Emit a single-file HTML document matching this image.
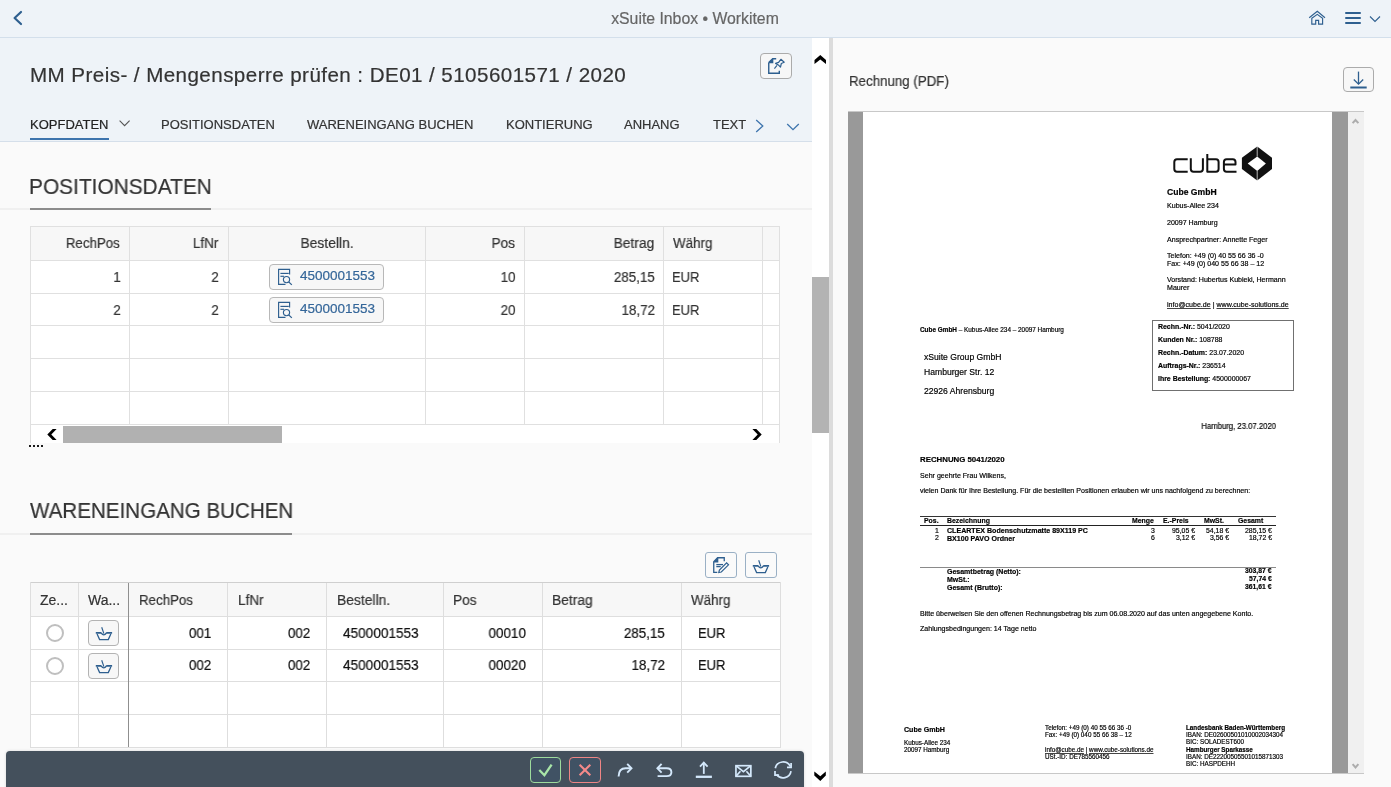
<!DOCTYPE html>
<html><head><meta charset="utf-8"><style>
html,body{margin:0;padding:0;}
body{width:1391px;height:787px;position:relative;overflow:hidden;font-family:"Liberation Sans",sans-serif;background:#fafafa;}
body>div{position:absolute;}
.t{white-space:pre;will-change:transform;}
u{text-decoration-thickness:0.5px;text-underline-offset:0.7px;text-decoration-color:#444;}
</style></head><body>
<div style="left:0px;top:0px;width:1391px;height:37px;background:#eef3f8;"></div>
<div style="left:0px;top:37px;width:1391px;height:1px;background:#d3dfeb;"></div>
<svg style="position:absolute;left:10px;top:8px;" width="16" height="20" viewBox="0 0 16 20"><polyline points="11,4 4.6,10 11,16" fill="none" stroke="#2e5f8f" stroke-width="2.2" stroke-linecap="round" stroke-linejoin="round"/></svg>
<div class="t" style="left:195.00px;width:1000px;text-align:center;top:10.98px;font-size:15.8px;line-height:15.8px;color:#666;font-weight:400;-webkit-text-stroke:0.2px #666;">xSuite Inbox &#8226; Workitem</div>
<svg style="position:absolute;left:1306px;top:8px;" width="22" height="20" viewBox="0 0 22 20"><g fill="none" stroke="#2e5f8f" stroke-width="1.15"><polyline points="3.2,9.8 11.3,3.3 19,9.8"/><path d="M5.8,10.3 L11.3,6.4 L16.6,10.3 V16.1 H12.6 V12.3 H9.7 V16.1 H5.8 Z"/></g></svg>
<div style="left:1344.5px;top:12px;width:16.5px;height:2px;background:#2e5f8f;border-radius:1px"></div>
<div style="left:1344.5px;top:17px;width:16.5px;height:2px;background:#2e5f8f;border-radius:1px"></div>
<div style="left:1344.5px;top:22px;width:16.5px;height:2px;background:#2e5f8f;border-radius:1px"></div>
<svg style="position:absolute;left:1368px;top:14px;" width="14" height="10" viewBox="0 0 14 10"><polyline points="2,2.5 7,7.5 12,2.5" fill="none" stroke="#2e5f8f" stroke-width="1.1"/></svg>
<div style="left:0px;top:38px;width:812px;height:103px;background:#eef3f8;"></div>
<div style="left:0px;top:141px;width:812px;height:1px;background:#d5dfea;"></div>
<div class="t" style="left:29.60px;top:65.41px;font-size:20.6px;line-height:20.6px;color:#333333;font-weight:400;-webkit-text-stroke:0.2px #333333;letter-spacing:0.43px">MM Preis- / Mengensperre pr&uuml;fen : DE01 / 5105601571 / 2020</div>
<div style="left:760px;top:53px;width:32px;height:26px;box-sizing:border-box;border:1px solid #ababab;border-radius:4px;background:#f7f7f7"></div>
<svg style="position:absolute;left:766px;top:56px;" width="20" height="20" viewBox="0 0 20 20"><g fill="none" stroke="#2e5f8f" stroke-width="1.4"><path d="M2.75,6.6 V17.2 H13.3 V14.8"/><path d="M2.75,6.6 L6.7,2.7 H10.2"/></g><path d="M2.05,7.2 L7.3,2 V7.2 Z" fill="#2e5f8f"/><g fill="none" stroke="#2e5f8f" stroke-width="1.2" stroke-linejoin="round"><path d="M14.9,3.3 L18.2,6.3 L15.3,7.5 L14.5,11.2 L12.8,9.3 L9.6,7.4 L12.6,6.4 Z"/><line x1="11" y1="9.4" x2="8.4" y2="12.6" stroke-width="1.1"/></g></svg>
<div class="t" style="left:30.20px;top:118.15px;font-size:13px;line-height:13px;color:#222;font-weight:400;-webkit-text-stroke:0.2px #222;">KOPFDATEN</div>
<div class="t" style="left:160.60px;top:118.15px;font-size:13px;line-height:13px;color:#333;font-weight:400;-webkit-text-stroke:0.2px #333;">POSITIONSDATEN</div>
<div class="t" style="left:307.00px;top:118.15px;font-size:13px;line-height:13px;color:#333;font-weight:400;-webkit-text-stroke:0.2px #333;">WARENEINGANG BUCHEN</div>
<div class="t" style="left:506.00px;top:118.15px;font-size:13px;line-height:13px;color:#333;font-weight:400;-webkit-text-stroke:0.2px #333;">KONTIERUNG</div>
<div class="t" style="left:624.40px;top:118.15px;font-size:13px;line-height:13px;color:#333;font-weight:400;-webkit-text-stroke:0.2px #333;">ANHANG</div>
<div class="t" style="left:712.50px;top:118.15px;font-size:13px;line-height:13px;color:#333;font-weight:400;-webkit-text-stroke:0.2px #333;">TEXT</div>
<svg style="position:absolute;left:117px;top:117px;" width="14" height="12" viewBox="0 0 14 12"><polyline points="2.6,3.6 7.6,8.6 12.6,3.6" fill="none" stroke="#555" stroke-width="1.1"/></svg>
<div style="left:30px;top:138px;width:79px;height:2px;background:#3d74ad;"></div>
<svg style="position:absolute;left:752px;top:117px;" width="14" height="18" viewBox="0 0 14 18"><polyline points="4.2,3 10.8,9 4.2,15" fill="none" stroke="#3d74ad" stroke-width="1.3"/></svg>
<svg style="position:absolute;left:785px;top:120px;" width="16" height="12" viewBox="0 0 16 12"><polyline points="2.2,4 8,9.7 13.8,4" fill="none" stroke="#3d74ad" stroke-width="1.3"/></svg>
<div style="left:0px;top:142px;width:812px;height:645px;background:#fafafa;"></div>
<div style="left:812px;top:38px;width:17px;height:749px;background:#ffffff;"></div>
<div style="left:829px;top:38px;width:4px;height:749px;background:#dcdcdc;"></div>
<svg style="position:absolute;left:812px;top:50px;" width="17" height="18" viewBox="0 0 17 18"><path d="M2.5,14 L8.3,9.4 L14,14 V10 L8.3,5 L2.5,10 Z" fill="#000"/></svg>
<div style="left:812px;top:277px;width:17px;height:156px;background:#b3b3b3;"></div>
<svg style="position:absolute;left:812px;top:768px;" width="17" height="16" viewBox="0 0 17 16"><path d="M2.3,3.6 L8.3,8.3 L13.8,3.6 V7.6 L8.3,12.9 L2.3,7.6 Z" fill="#000"/></svg>
<div style="left:833px;top:38px;width:558px;height:749px;background:#fafafa;"></div>
<div class="t" style="left:849.20px;top:73.75px;font-size:14px;line-height:14px;color:#333333;font-weight:400;transform:scaleX(0.95);transform-origin:0 0;-webkit-text-stroke:0.2px #333333;">Rechnung (PDF)</div>
<div style="left:1343px;top:67px;width:31px;height:25px;box-sizing:border-box;border:1px solid #ababab;border-radius:4px;background:#f7f7f7"></div>
<svg style="position:absolute;left:1343px;top:67px;" width="31" height="25" viewBox="0 0 31 25"><g fill="none" stroke="#2e5f8f"><line x1="15.5" y1="4.6" x2="15.5" y2="17" stroke-width="1.3"/><polyline points="10.8,12.5 15.5,17.2 20.2,12.5" stroke-width="1.3"/><line x1="7.3" y1="20.5" x2="23.7" y2="20.5" stroke-width="2"/></g></svg>
<div style="left:848px;top:111px;width:516px;height:1px;background:#c8c8c8;"></div>
<div style="left:848px;top:112px;width:15px;height:661px;background:#999999;"></div>
<div style="left:863px;top:112px;width:469px;height:661px;background:#ffffff;"></div>
<div style="left:1332px;top:112px;width:16px;height:661px;background:#999999;"></div>
<div style="left:1348px;top:112px;width:16px;height:661px;background:#f0f0f0;"></div>
<div style="left:848px;top:773px;width:516px;height:1px;background:#c8c8c8;"></div>
<svg style="position:absolute;left:1348px;top:114px;" width="16" height="14" viewBox="0 0 16 14"><polyline points="4.6,9.2 7.5,6 10.4,9.2" fill="none" stroke="#adadad" stroke-width="2"/></svg>
<svg style="position:absolute;left:1348px;top:758px;" width="16" height="14" viewBox="0 0 16 14"><polyline points="4.6,6.2 7.5,9.4 10.4,6.2" fill="none" stroke="#adadad" stroke-width="2"/></svg>
<svg style="position:absolute;left:1170px;top:145px;" width="110" height="40" viewBox="0 0 110 40"><g fill="none" stroke="#111" stroke-width="2" stroke-linejoin="round"><path d="M17.7,14.2 H7 Q4.3,14.2 4.3,17 V24 Q4.3,26.7 7,26.7 H17.7"/><path d="M20.8,13.2 V24 Q20.8,26.7 23.5,26.7 H30.2 Q32.9,26.7 32.9,24 V13.2"/><path d="M37.3,9.1 V26.7 H46 Q48.6,26.7 48.6,24 V17 Q48.6,14.2 46,14.2 H37.3"/><path d="M66.5,26.7 H56.6 Q53.9,26.7 53.9,24 V17 Q53.9,14.2 56.6,14.2 H62.8 Q65.5,14.2 65.5,17 V19.4 H53.9"/></g><path d="M87.2,1.6 L102,12.8 V23.9 L87.2,35.5 L71.9,23.9 V12.8 Z" fill="#111"/><path d="M87.2,11.5 L95.9,18.6 L87.2,26 L77.7,18.6 Z" fill="#fff"/><line x1="87.2" y1="1" x2="87.2" y2="11.5" stroke="#fff" stroke-width="0.7"/><line x1="87.2" y1="26" x2="87.2" y2="36" stroke="#fff" stroke-width="0.7"/></svg>
<div class="t" style="left:1166.50px;top:187.67px;font-size:8.6px;line-height:8.6px;color:#000;font-weight:700;-webkit-text-stroke:0.18px #000;">Cube GmbH</div>
<div class="t" style="left:1166.50px;top:202.27px;font-size:7.07px;line-height:7.07px;color:#000;font-weight:400;-webkit-text-stroke:0.18px #000;">Kubus-Allee 234</div>
<div class="t" style="left:1166.50px;top:219.47px;font-size:7.07px;line-height:7.07px;color:#000;font-weight:400;-webkit-text-stroke:0.18px #000;">20097 Hamburg</div>
<div class="t" style="left:1166.50px;top:235.87px;font-size:7.07px;line-height:7.07px;color:#000;font-weight:400;-webkit-text-stroke:0.18px #000;">Ansprechpartner: Annette Feger</div>
<div class="t" style="left:1166.50px;top:252.27px;font-size:7.07px;line-height:7.07px;color:#000;font-weight:400;-webkit-text-stroke:0.18px #000;">Telefon: +49 (0) 40 55 66 36 -0</div>
<div class="t" style="left:1166.50px;top:260.17px;font-size:7.07px;line-height:7.07px;color:#000;font-weight:400;-webkit-text-stroke:0.18px #000;">Fax: +49 (0) 040 55 66 38 &#8211; 12</div>
<div class="t" style="left:1166.50px;top:276.47px;font-size:7.07px;line-height:7.07px;color:#000;font-weight:400;-webkit-text-stroke:0.18px #000;">Vorstand: Hubertus Kubieki, Hermann</div>
<div class="t" style="left:1166.50px;top:284.17px;font-size:7.07px;line-height:7.07px;color:#000;font-weight:400;-webkit-text-stroke:0.18px #000;">Maurer</div>
<div class="t" style="left:1166.50px;top:300.87px;font-size:7.07px;line-height:7.07px;color:#000;font-weight:400;-webkit-text-stroke:0.18px #000;"><u>info@cube.de</u> | <u>www.cube-solutions.de</u></div>
<div class="t" style="left:920.10px;top:327.33px;font-size:6.4px;line-height:6.4px;color:#000;font-weight:400;-webkit-text-stroke:0.18px #000;"><b>Cube GmbH</b> &#8211; Kubus-Allee 234 &#8211; 20097 Hamburg</div>
<div class="t" style="left:923.60px;top:353.07px;font-size:8.6px;line-height:8.6px;color:#000;font-weight:400;-webkit-text-stroke:0.18px #000;">xSuite Group GmbH</div>
<div class="t" style="left:923.60px;top:367.97px;font-size:8.6px;line-height:8.6px;color:#000;font-weight:400;-webkit-text-stroke:0.18px #000;">Hamburger Str. 12</div>
<div class="t" style="left:923.60px;top:387.27px;font-size:8.6px;line-height:8.6px;color:#000;font-weight:400;-webkit-text-stroke:0.18px #000;">22926 Ahrensburg</div>
<div style="left:1152px;top:319.5px;width:142px;height:71.5px;box-sizing:border-box;border:1px solid #707070"></div>
<div class="t" style="left:1158.20px;top:324.07px;font-size:6.95px;line-height:6.95px;color:#000;font-weight:400;-webkit-text-stroke:0.18px #000;"><b>Rechn.-Nr.:</b> 5041/2020</div>
<div class="t" style="left:1158.20px;top:337.07px;font-size:6.95px;line-height:6.95px;color:#000;font-weight:400;-webkit-text-stroke:0.18px #000;"><b>Kunden Nr.:</b> 108788</div>
<div class="t" style="left:1158.20px;top:349.97px;font-size:6.95px;line-height:6.95px;color:#000;font-weight:400;-webkit-text-stroke:0.18px #000;"><b>Rechn.-Datum:</b> 23.07.2020</div>
<div class="t" style="left:1158.20px;top:362.87px;font-size:6.95px;line-height:6.95px;color:#000;font-weight:400;-webkit-text-stroke:0.18px #000;"><b>Auftrags-Nr.:</b> 236514</div>
<div class="t" style="left:1158.20px;top:375.57px;font-size:6.95px;line-height:6.95px;color:#000;font-weight:400;-webkit-text-stroke:0.18px #000;"><b>Ihre Bestellung:</b> 4500000067</div>
<div class="t" style="right:114.80px;top:421.62px;font-size:8.6px;line-height:8.6px;color:#000;font-weight:400;transform:scaleX(0.9);transform-origin:100% 0;-webkit-text-stroke:0.18px #000;">Hamburg, 23.07.2020</div>
<div class="t" style="left:919.80px;top:455.80px;font-size:7.85px;line-height:7.85px;color:#000;font-weight:700;-webkit-text-stroke:0.18px #000;">RECHNUNG 5041/2020</div>
<div class="t" style="left:919.80px;top:471.87px;font-size:7.07px;line-height:7.07px;color:#000;font-weight:400;-webkit-text-stroke:0.18px #000;">Sehr geehrte Frau Wilkens,</div>
<div class="t" style="left:919.80px;top:486.87px;font-size:7.07px;line-height:7.07px;color:#000;font-weight:400;-webkit-text-stroke:0.18px #000;">vielen Dank f&uuml;r Ihre Bestellung. F&uuml;r die bestellten Positionen erlauben wir uns nachfolgend zu berechnen:</div>
<div style="left:919.5px;top:515.5px;width:356.5px;height:1.5px;background:#333;"></div>
<div style="left:919.5px;top:524.5px;width:356.5px;height:1.0px;background:#222;"></div>
<div class="t" style="left:923.70px;top:517.61px;font-size:6.9px;line-height:6.9px;color:#000;font-weight:700;-webkit-text-stroke:0.18px #000;">Pos.</div>
<div class="t" style="left:947.40px;top:517.61px;font-size:6.9px;line-height:6.9px;color:#000;font-weight:700;-webkit-text-stroke:0.18px #000;">Bezeichnung</div>
<div class="t" style="right:237.10px;top:517.61px;font-size:6.9px;line-height:6.9px;color:#000;font-weight:700;-webkit-text-stroke:0.18px #000;">Menge</div>
<div class="t" style="right:202.00px;top:517.61px;font-size:6.9px;line-height:6.9px;color:#000;font-weight:700;-webkit-text-stroke:0.18px #000;">E.-Preis</div>
<div class="t" style="right:167.00px;top:517.61px;font-size:6.9px;line-height:6.9px;color:#000;font-weight:700;-webkit-text-stroke:0.18px #000;">MwSt.</div>
<div class="t" style="right:127.80px;top:517.61px;font-size:6.9px;line-height:6.9px;color:#000;font-weight:700;-webkit-text-stroke:0.18px #000;">Gesamt</div>
<div class="t" style="right:452.60px;top:527.51px;font-size:6.9px;line-height:6.9px;color:#000;font-weight:400;-webkit-text-stroke:0.18px #000;">1</div>
<div class="t" style="left:947.40px;top:527.37px;font-size:7.07px;line-height:7.07px;color:#000;font-weight:700;-webkit-text-stroke:0.18px #000;">CLEARTEX Bodenschutzmatte 89X119 PC</div>
<div class="t" style="right:236.50px;top:527.51px;font-size:6.9px;line-height:6.9px;color:#000;font-weight:400;-webkit-text-stroke:0.18px #000;">3</div>
<div class="t" style="right:196.10px;top:527.51px;font-size:6.9px;line-height:6.9px;color:#000;font-weight:400;-webkit-text-stroke:0.18px #000;">95,05 &#8364;</div>
<div class="t" style="right:162.00px;top:527.51px;font-size:6.9px;line-height:6.9px;color:#000;font-weight:400;-webkit-text-stroke:0.18px #000;">54,18 &#8364;</div>
<div class="t" style="right:119.10px;top:527.51px;font-size:6.9px;line-height:6.9px;color:#000;font-weight:400;-webkit-text-stroke:0.18px #000;">285,15 &#8364;</div>
<div class="t" style="right:452.60px;top:535.41px;font-size:6.9px;line-height:6.9px;color:#000;font-weight:400;-webkit-text-stroke:0.18px #000;">2</div>
<div class="t" style="left:947.40px;top:535.27px;font-size:7.07px;line-height:7.07px;color:#000;font-weight:700;-webkit-text-stroke:0.18px #000;">BX100 PAVO Ordner</div>
<div class="t" style="right:236.50px;top:535.41px;font-size:6.9px;line-height:6.9px;color:#000;font-weight:400;-webkit-text-stroke:0.18px #000;">6</div>
<div class="t" style="right:196.10px;top:535.41px;font-size:6.9px;line-height:6.9px;color:#000;font-weight:400;-webkit-text-stroke:0.18px #000;">3,12 &#8364;</div>
<div class="t" style="right:162.00px;top:535.41px;font-size:6.9px;line-height:6.9px;color:#000;font-weight:400;-webkit-text-stroke:0.18px #000;">3,56 &#8364;</div>
<div class="t" style="right:119.10px;top:535.41px;font-size:6.9px;line-height:6.9px;color:#000;font-weight:400;-webkit-text-stroke:0.18px #000;">18,72 &#8364;</div>
<div style="left:919.5px;top:566.5px;width:356.5px;height:1.5px;background:#8a8a8a;"></div>
<div class="t" style="left:947.40px;top:567.82px;font-size:7.0px;line-height:7.0px;color:#000;font-weight:700;-webkit-text-stroke:0.18px #000;">Gesamtbetrag (Netto):</div>
<div class="t" style="right:119.10px;top:567.99px;font-size:6.8px;line-height:6.8px;color:#000;font-weight:700;-webkit-text-stroke:0.18px #000;">303,87 &#8364;</div>
<div class="t" style="left:947.40px;top:576.02px;font-size:7.0px;line-height:7.0px;color:#000;font-weight:700;-webkit-text-stroke:0.18px #000;">MwSt.:</div>
<div class="t" style="right:119.10px;top:576.19px;font-size:6.8px;line-height:6.8px;color:#000;font-weight:700;-webkit-text-stroke:0.18px #000;">57,74 &#8364;</div>
<div class="t" style="left:947.40px;top:584.22px;font-size:7.0px;line-height:7.0px;color:#000;font-weight:700;-webkit-text-stroke:0.18px #000;">Gesamt (Brutto):</div>
<div class="t" style="right:119.10px;top:584.39px;font-size:6.8px;line-height:6.8px;color:#000;font-weight:700;-webkit-text-stroke:0.18px #000;">361,61 &#8364;</div>
<div class="t" style="left:919.60px;top:610.07px;font-size:7.07px;line-height:7.07px;color:#000;font-weight:400;-webkit-text-stroke:0.18px #000;">Bitte &uuml;berweisen Sie den offenen Rechnungsbetrag bis zum 06.08.2020 auf das unten angegebene Konto.</div>
<div class="t" style="left:919.60px;top:625.17px;font-size:7.07px;line-height:7.07px;color:#000;font-weight:400;-webkit-text-stroke:0.18px #000;">Zahlungsbedingungen: 14 Tage netto</div>
<div class="t" style="left:903.50px;top:727.34px;font-size:7.1px;line-height:7.1px;color:#000;font-weight:700;-webkit-text-stroke:0.18px #000;">Cube GmbH</div>
<div class="t" style="left:903.50px;top:740.12px;font-size:6.3px;line-height:6.3px;color:#000;font-weight:400;-webkit-text-stroke:0.18px #000;">Kubus-Allee 234</div>
<div class="t" style="left:903.50px;top:747.12px;font-size:6.3px;line-height:6.3px;color:#000;font-weight:400;-webkit-text-stroke:0.18px #000;">20097 Hamburg</div>
<div class="t" style="left:1045.00px;top:725.42px;font-size:6.3px;line-height:6.3px;color:#000;font-weight:400;-webkit-text-stroke:0.18px #000;">Telefon: +49 (0) 40 55 66 36 -0</div>
<div class="t" style="left:1045.00px;top:732.42px;font-size:6.3px;line-height:6.3px;color:#000;font-weight:400;-webkit-text-stroke:0.18px #000;">Fax: +49 (0) 040 55 66 38 &#8211; 12</div>
<div class="t" style="left:1045.00px;top:746.72px;font-size:6.3px;line-height:6.3px;color:#000;font-weight:400;-webkit-text-stroke:0.18px #000;"><u>info@cube.de</u> | <u>www.cube-solutions.de</u></div>
<div class="t" style="left:1045.00px;top:753.82px;font-size:6.3px;line-height:6.3px;color:#000;font-weight:400;-webkit-text-stroke:0.18px #000;">USt.-ID: DE785560456</div>
<div class="t" style="left:1185.80px;top:725.02px;font-size:6.3px;line-height:6.3px;color:#000;font-weight:700;-webkit-text-stroke:0.18px #000;">Landesbank Baden-W&uuml;rttemberg</div>
<div class="t" style="left:1185.80px;top:732.22px;font-size:6.3px;line-height:6.3px;color:#000;font-weight:400;-webkit-text-stroke:0.18px #000;">IBAN: DE02600501010002034304</div>
<div class="t" style="left:1185.80px;top:739.42px;font-size:6.3px;line-height:6.3px;color:#000;font-weight:400;-webkit-text-stroke:0.18px #000;">BIC: SOLADEST600</div>
<div class="t" style="left:1185.80px;top:746.62px;font-size:6.3px;line-height:6.3px;color:#000;font-weight:700;-webkit-text-stroke:0.18px #000;">Hamburger Sparkasse</div>
<div class="t" style="left:1185.80px;top:753.62px;font-size:6.3px;line-height:6.3px;color:#000;font-weight:400;-webkit-text-stroke:0.18px #000;">IBAN: DE22200505501015871303</div>
<div class="t" style="left:1185.80px;top:760.92px;font-size:6.3px;line-height:6.3px;color:#000;font-weight:400;-webkit-text-stroke:0.18px #000;">BIC: HASPDEHH</div>
<div class="t" style="left:29.30px;top:176.35px;font-size:21.2px;line-height:21.2px;color:#333333;font-weight:400;transform:scaleX(0.985);transform-origin:0 0;-webkit-text-stroke:0.2px #333333;">POSITIONSDATEN</div>
<div style="left:0px;top:208px;width:812px;height:2px;background:#f0f0f0;"></div>
<div style="left:30px;top:208px;width:181px;height:2px;background:#8c8c8c;"></div>
<div style="left:30px;top:226px;width:750px;height:217px;background:#ffffff;"></div>
<div style="left:31px;top:227px;width:748px;height:33px;background:#f7f7f7;"></div>
<div style="left:30px;top:226px;width:750px;height:1px;background:#e0e0e0;"></div>
<div style="left:30px;top:226px;width:1px;height:217px;background:#e0e0e0;"></div>
<div style="left:779px;top:226px;width:1px;height:217px;background:#e0e0e0;"></div>
<div style="left:30px;top:260px;width:750px;height:1px;background:#e0e0e0;"></div>
<div style="left:30px;top:293px;width:750px;height:1px;background:#e0e0e0;"></div>
<div style="left:30px;top:325px;width:750px;height:1px;background:#e0e0e0;"></div>
<div style="left:30px;top:358px;width:750px;height:1px;background:#e0e0e0;"></div>
<div style="left:30px;top:391px;width:750px;height:1px;background:#e0e0e0;"></div>
<div style="left:30px;top:424px;width:750px;height:1px;background:#e0e0e0;"></div>
<div style="left:129px;top:226px;width:1px;height:198px;background:#e0e0e0;"></div>
<div style="left:228px;top:226px;width:1px;height:198px;background:#e0e0e0;"></div>
<div style="left:425px;top:226px;width:1px;height:198px;background:#e0e0e0;"></div>
<div style="left:524px;top:226px;width:1px;height:198px;background:#e0e0e0;"></div>
<div style="left:663px;top:226px;width:1px;height:198px;background:#e0e0e0;"></div>
<div style="left:762px;top:226px;width:1px;height:198px;background:#e0e0e0;"></div>
<div class="t" style="right:1271.40px;top:236.45px;font-size:14px;line-height:14px;color:#333333;font-weight:400;transform:scaleX(0.95);transform-origin:100% 0;-webkit-text-stroke:0.2px #333333;">RechPos</div>
<div class="t" style="right:1172.30px;top:236.45px;font-size:14px;line-height:14px;color:#333333;font-weight:400;transform:scaleX(0.97);transform-origin:100% 0;-webkit-text-stroke:0.2px #333333;">LfNr</div>
<div class="t" style="left:-173.50px;width:1000px;text-align:center;top:236.45px;font-size:14px;line-height:14px;color:#333333;font-weight:400;transform:scaleX(0.99);transform-origin:50% 0;-webkit-text-stroke:0.2px #333333;">Bestelln.</div>
<div class="t" style="right:875.70px;top:236.45px;font-size:14px;line-height:14px;color:#333333;font-weight:400;transform:scaleX(0.98);transform-origin:100% 0;-webkit-text-stroke:0.2px #333333;">Pos</div>
<div class="t" style="right:736.40px;top:236.45px;font-size:14px;line-height:14px;color:#333333;font-weight:400;transform:scaleX(0.985);transform-origin:100% 0;-webkit-text-stroke:0.2px #333333;">Betrag</div>
<div class="t" style="left:673.10px;top:236.45px;font-size:14px;line-height:14px;color:#333333;font-weight:400;transform:scaleX(0.956);transform-origin:0 0;-webkit-text-stroke:0.2px #333333;">W&auml;hrg</div>
<div class="t" style="right:1270.60px;top:270.15px;font-size:14px;line-height:14px;color:#333333;font-weight:400;transform:scaleX(0.96);transform-origin:100% 0;-webkit-text-stroke:0.2px #333333;">1</div>
<div class="t" style="right:1172.00px;top:270.15px;font-size:14px;line-height:14px;color:#333333;font-weight:400;transform:scaleX(0.96);transform-origin:100% 0;-webkit-text-stroke:0.2px #333333;">2</div>
<div style="left:269px;top:264px;width:115px;height:26px;box-sizing:border-box;border:1px solid #b8b8b8;border-radius:4px;background:#f7f7f7"></div>
<svg style="position:absolute;left:277px;top:268px" width="17" height="18" viewBox="0 0 17 18"><g fill="none" stroke="#2e5f8f" stroke-width="1.15"><path d="M8.5,16.4 H1.6 V1.4 H12.6 V6.6"/><line x1="3.4" y1="5.4" x2="11.8" y2="5.4"/><line x1="3.4" y1="8.3" x2="7" y2="8.3"/><circle cx="9.5" cy="11.6" r="3.1"/><line x1="11.7" y1="13.9" x2="14.8" y2="16.9" stroke-width="1.3"/></g></svg>
<div class="t" style="left:300.10px;top:269.27px;font-size:13.5px;line-height:13.5px;color:#346699;font-weight:400;transform:scaleX(1.0);transform-origin:0 0;-webkit-text-stroke:0.2px #346699;">4500001553</div>
<div class="t" style="right:875.50px;top:270.15px;font-size:14px;line-height:14px;color:#333333;font-weight:400;transform:scaleX(0.96);transform-origin:100% 0;-webkit-text-stroke:0.2px #333333;">10</div>
<div class="t" style="right:736.10px;top:270.15px;font-size:14px;line-height:14px;color:#333333;font-weight:400;transform:scaleX(0.956);transform-origin:100% 0;-webkit-text-stroke:0.2px #333333;">285,15</div>
<div class="t" style="left:671.90px;top:270.15px;font-size:14px;line-height:14px;color:#333333;font-weight:400;transform:scaleX(0.925);transform-origin:0 0;-webkit-text-stroke:0.2px #333333;">EUR</div>
<div class="t" style="right:1270.60px;top:303.15px;font-size:14px;line-height:14px;color:#333333;font-weight:400;transform:scaleX(0.96);transform-origin:100% 0;-webkit-text-stroke:0.2px #333333;">2</div>
<div class="t" style="right:1172.00px;top:303.15px;font-size:14px;line-height:14px;color:#333333;font-weight:400;transform:scaleX(0.96);transform-origin:100% 0;-webkit-text-stroke:0.2px #333333;">2</div>
<div style="left:269px;top:297px;width:115px;height:26px;box-sizing:border-box;border:1px solid #b8b8b8;border-radius:4px;background:#f7f7f7"></div>
<svg style="position:absolute;left:277px;top:301px" width="17" height="18" viewBox="0 0 17 18"><g fill="none" stroke="#2e5f8f" stroke-width="1.15"><path d="M8.5,16.4 H1.6 V1.4 H12.6 V6.6"/><line x1="3.4" y1="5.4" x2="11.8" y2="5.4"/><line x1="3.4" y1="8.3" x2="7" y2="8.3"/><circle cx="9.5" cy="11.6" r="3.1"/><line x1="11.7" y1="13.9" x2="14.8" y2="16.9" stroke-width="1.3"/></g></svg>
<div class="t" style="left:300.10px;top:302.27px;font-size:13.5px;line-height:13.5px;color:#346699;font-weight:400;transform:scaleX(1.0);transform-origin:0 0;-webkit-text-stroke:0.2px #346699;">4500001553</div>
<div class="t" style="right:875.50px;top:303.15px;font-size:14px;line-height:14px;color:#333333;font-weight:400;transform:scaleX(0.96);transform-origin:100% 0;-webkit-text-stroke:0.2px #333333;">20</div>
<div class="t" style="right:736.10px;top:303.15px;font-size:14px;line-height:14px;color:#333333;font-weight:400;transform:scaleX(0.956);transform-origin:100% 0;-webkit-text-stroke:0.2px #333333;">18,72</div>
<div class="t" style="left:671.90px;top:303.15px;font-size:14px;line-height:14px;color:#333333;font-weight:400;transform:scaleX(0.925);transform-origin:0 0;-webkit-text-stroke:0.2px #333333;">EUR</div>
<div style="left:63px;top:426px;width:219px;height:17px;background:#b1b1b1;"></div>
<svg style="position:absolute;left:0;top:0" width="812" height="460" viewBox="0 0 812 460"><path d="M56.6,428.9 H52.7 L47.3,434.4 L52.7,440 H56.6 L51.3,434.4 Z" fill="#000"/><path d="M752.4,428.9 H756.3 L761.7,434.4 L756.3,440 H752.4 L757.7,434.4 Z" fill="#000"/></svg>
<div style="left:29px;top:445px;width:2px;height:2px;background:#1a1a1a;"></div>
<div style="left:33px;top:445px;width:2px;height:2px;background:#1a1a1a;"></div>
<div style="left:37px;top:445px;width:2px;height:2px;background:#1a1a1a;"></div>
<div style="left:41px;top:445px;width:2px;height:2px;background:#1a1a1a;"></div>
<div class="t" style="left:30.10px;top:500.05px;font-size:21.2px;line-height:21.2px;color:#333333;font-weight:400;transform:scaleX(0.971);transform-origin:0 0;-webkit-text-stroke:0.2px #333333;">WARENEINGANG BUCHEN</div>
<div style="left:0px;top:533px;width:812px;height:2px;background:#f0f0f0;"></div>
<div style="left:30px;top:533px;width:262px;height:2px;background:#8c8c8c;"></div>
<div style="left:705px;top:552px;width:32px;height:26px;box-sizing:border-box;border:1px solid #9ab0c5;border-radius:3px"></div>
<div style="left:745px;top:552px;width:32px;height:26px;box-sizing:border-box;border:1px solid #9ab0c5;border-radius:3px"></div>
<svg style="position:absolute;left:711px;top:555px;" width="20" height="20" viewBox="0 0 20 20"><g fill="none" stroke="#2e5f8f" stroke-width="1.3"><path d="M6.3,17.3 H2.75 V6.8 L6.6,2.75 H13.25 V6.2"/><line x1="5.3" y1="9.6" x2="12" y2="9.6"/><line x1="5.3" y1="11.6" x2="9.7" y2="11.6"/><path d="M7.8,17.4 L8.4,15.1 L15.6,7.9 L17.5,9.8 L10.3,17 Z" stroke-width="1.2"/></g><path d="M2.1,7.4 L7.3,2.1 V7.4 Z" fill="#2e5f8f"/></svg>
<svg style="position:absolute;left:752px;top:557.5px" width="18" height="17" viewBox="0 0 18 17"><g fill="none" stroke="#2e5f8f"><line x1="6.7" y1="2.3" x2="8.9" y2="8.6" stroke-width="1.15"/><path d="M0.8,7.9 H6.4 M11.2,7.9 H17.1" stroke-width="1.9"/><path d="M6.2,8 Q8.8,11.6 11.4,8" stroke-width="1.3"/><path d="M2.1,9 L4.6,14.6 H13.3 L15.8,9" stroke-width="1.3"/></g></svg>
<div style="left:30px;top:582px;width:751px;height:165px;background:#ffffff;"></div>
<div style="left:31px;top:583px;width:749px;height:33px;background:#f7f7f7;"></div>
<div style="left:30px;top:582px;width:751px;height:1px;background:#cfcfcf;"></div>
<div style="left:30px;top:582px;width:1px;height:166px;background:#dedede;"></div>
<div style="left:780px;top:582px;width:1px;height:166px;background:#dedede;"></div>
<div style="left:30px;top:616px;width:751px;height:1px;background:#dedede;"></div>
<div style="left:30px;top:649px;width:751px;height:1px;background:#dedede;"></div>
<div style="left:30px;top:681px;width:751px;height:1px;background:#dedede;"></div>
<div style="left:30px;top:714px;width:751px;height:1px;background:#dedede;"></div>
<div style="left:30px;top:747px;width:751px;height:1px;background:#dedede;"></div>
<div style="left:78px;top:583px;width:1px;height:164px;background:#dedede;"></div>
<div style="left:227px;top:583px;width:1px;height:164px;background:#dedede;"></div>
<div style="left:326px;top:583px;width:1px;height:164px;background:#dedede;"></div>
<div style="left:443px;top:583px;width:1px;height:164px;background:#dedede;"></div>
<div style="left:542px;top:583px;width:1px;height:164px;background:#dedede;"></div>
<div style="left:681px;top:583px;width:1px;height:164px;background:#dedede;"></div>
<div style="left:128px;top:583px;width:1px;height:164px;background:#8f8f8f;"></div>
<div class="t" style="left:39.90px;top:592.55px;font-size:14px;line-height:14px;color:#333333;font-weight:400;transform:scaleX(1.0);transform-origin:0 0;-webkit-text-stroke:0.2px #333333;">Ze...</div>
<div class="t" style="left:87.90px;top:592.55px;font-size:14px;line-height:14px;color:#333333;font-weight:400;transform:scaleX(1.0);transform-origin:0 0;-webkit-text-stroke:0.2px #333333;">Wa...</div>
<div class="t" style="left:138.70px;top:592.55px;font-size:14px;line-height:14px;color:#333333;font-weight:400;transform:scaleX(0.95);transform-origin:0 0;-webkit-text-stroke:0.2px #333333;">RechPos</div>
<div class="t" style="left:237.60px;top:592.55px;font-size:14px;line-height:14px;color:#333333;font-weight:400;transform:scaleX(0.97);transform-origin:0 0;-webkit-text-stroke:0.2px #333333;">LfNr</div>
<div class="t" style="left:336.60px;top:592.55px;font-size:14px;line-height:14px;color:#333333;font-weight:400;transform:scaleX(0.99);transform-origin:0 0;-webkit-text-stroke:0.2px #333333;">Bestelln.</div>
<div class="t" style="left:453.00px;top:592.55px;font-size:14px;line-height:14px;color:#333333;font-weight:400;transform:scaleX(0.98);transform-origin:0 0;-webkit-text-stroke:0.2px #333333;">Pos</div>
<div class="t" style="left:552.10px;top:592.55px;font-size:14px;line-height:14px;color:#333333;font-weight:400;transform:scaleX(0.985);transform-origin:0 0;-webkit-text-stroke:0.2px #333333;">Betrag</div>
<div class="t" style="left:691.10px;top:592.55px;font-size:14px;line-height:14px;color:#333333;font-weight:400;transform:scaleX(0.956);transform-origin:0 0;-webkit-text-stroke:0.2px #333333;">W&auml;hrg</div>
<div style="left:45.7px;top:624px;width:18px;height:18px;box-sizing:border-box;border:2px solid #bfbfbf;border-radius:50%;background:#fff"></div>
<div style="left:88px;top:620px;width:31px;height:26px;box-sizing:border-box;border:1px solid #b3b3b3;border-radius:4px;background:#f7f7f7"></div>
<svg style="position:absolute;left:94.5px;top:625px" width="18" height="17" viewBox="0 0 18 17"><g fill="none" stroke="#2e5f8f"><line x1="6.7" y1="2.3" x2="8.9" y2="8.6" stroke-width="1.15"/><path d="M0.8,7.9 H6.4 M11.2,7.9 H17.1" stroke-width="1.9"/><path d="M6.2,8 Q8.8,11.6 11.4,8" stroke-width="1.3"/><path d="M2.1,9 L4.6,14.6 H13.3 L15.8,9" stroke-width="1.3"/></g></svg>
<div class="t" style="right:1179.60px;top:626.05px;font-size:14px;line-height:14px;color:#111111;font-weight:400;transform:scaleX(0.96);transform-origin:100% 0;-webkit-text-stroke:0.2px #111111;">001</div>
<div class="t" style="right:1081.00px;top:626.05px;font-size:14px;line-height:14px;color:#111111;font-weight:400;transform:scaleX(0.96);transform-origin:100% 0;-webkit-text-stroke:0.2px #111111;">002</div>
<div class="t" style="left:343.40px;top:626.05px;font-size:14px;line-height:14px;color:#111111;font-weight:400;transform:scaleX(0.972);transform-origin:0 0;-webkit-text-stroke:0.2px #111111;">4500001553</div>
<div class="t" style="right:865.40px;top:626.05px;font-size:14px;line-height:14px;color:#111111;font-weight:400;transform:scaleX(0.96);transform-origin:100% 0;-webkit-text-stroke:0.2px #111111;">00010</div>
<div class="t" style="right:725.70px;top:626.05px;font-size:14px;line-height:14px;color:#111111;font-weight:400;transform:scaleX(0.956);transform-origin:100% 0;-webkit-text-stroke:0.2px #111111;">285,15</div>
<div class="t" style="left:697.60px;top:626.05px;font-size:14px;line-height:14px;color:#111111;font-weight:400;transform:scaleX(0.925);transform-origin:0 0;-webkit-text-stroke:0.2px #111111;">EUR</div>
<div style="left:45.7px;top:657px;width:18px;height:18px;box-sizing:border-box;border:2px solid #bfbfbf;border-radius:50%;background:#fff"></div>
<div style="left:88px;top:653px;width:31px;height:26px;box-sizing:border-box;border:1px solid #b3b3b3;border-radius:4px;background:#f7f7f7"></div>
<svg style="position:absolute;left:94.5px;top:658px" width="18" height="17" viewBox="0 0 18 17"><g fill="none" stroke="#2e5f8f"><line x1="6.7" y1="2.3" x2="8.9" y2="8.6" stroke-width="1.15"/><path d="M0.8,7.9 H6.4 M11.2,7.9 H17.1" stroke-width="1.9"/><path d="M6.2,8 Q8.8,11.6 11.4,8" stroke-width="1.3"/><path d="M2.1,9 L4.6,14.6 H13.3 L15.8,9" stroke-width="1.3"/></g></svg>
<div class="t" style="right:1179.60px;top:658.15px;font-size:14px;line-height:14px;color:#111111;font-weight:400;transform:scaleX(0.96);transform-origin:100% 0;-webkit-text-stroke:0.2px #111111;">002</div>
<div class="t" style="right:1081.00px;top:658.15px;font-size:14px;line-height:14px;color:#111111;font-weight:400;transform:scaleX(0.96);transform-origin:100% 0;-webkit-text-stroke:0.2px #111111;">002</div>
<div class="t" style="left:343.40px;top:658.15px;font-size:14px;line-height:14px;color:#111111;font-weight:400;transform:scaleX(0.972);transform-origin:0 0;-webkit-text-stroke:0.2px #111111;">4500001553</div>
<div class="t" style="right:865.40px;top:658.15px;font-size:14px;line-height:14px;color:#111111;font-weight:400;transform:scaleX(0.96);transform-origin:100% 0;-webkit-text-stroke:0.2px #111111;">00020</div>
<div class="t" style="right:725.70px;top:658.15px;font-size:14px;line-height:14px;color:#111111;font-weight:400;transform:scaleX(0.956);transform-origin:100% 0;-webkit-text-stroke:0.2px #111111;">18,72</div>
<div class="t" style="left:697.60px;top:658.15px;font-size:14px;line-height:14px;color:#111111;font-weight:400;transform:scaleX(0.925);transform-origin:0 0;-webkit-text-stroke:0.2px #111111;">EUR</div>
<div style="left:6px;top:751px;width:798px;height:40px;background:#44505c;border-radius:4px 4px 0 0;box-shadow:0 0 3px rgba(0,0,0,0.15)"></div>
<div style="left:530px;top:757px;width:31px;height:26px;box-sizing:border-box;border:1px solid #9ddb9d;border-radius:4px;background:#405264"></div>
<svg style="position:absolute;left:530px;top:757px;" width="31" height="26" viewBox="0 0 31 26"><polyline points="9.3,13 14.4,18.2 21.6,7.6" fill="none" stroke="#a8e6a8" stroke-width="2.3"/></svg>
<div style="left:569px;top:757px;width:32px;height:26px;box-sizing:border-box;border:1px solid #ef8585;border-radius:4px;background:#405264"></div>
<svg style="position:absolute;left:569px;top:757px;" width="32" height="26" viewBox="0 0 32 26"><g stroke="#f58a8a" stroke-width="2.1"><line x1="10.6" y1="7.8" x2="21.3" y2="18.3"/><line x1="21.3" y1="7.8" x2="10.6" y2="18.3"/></g></svg>
<svg style="position:absolute;left:612px;top:758px;" width="26" height="24" viewBox="0 0 26 24"><g fill="none" stroke="#d4e8fb" stroke-width="1.9"><path d="M6.6,18.4 Q6.8,10.4 13.6,10.3 H19"/><polyline points="15.2,5.9 19.5,10.3 15.2,14.7"/></g></svg>
<svg style="position:absolute;left:651px;top:758px;" width="26" height="24" viewBox="0 0 26 24"><g fill="none" stroke="#d4e8fb" stroke-width="1.9"><polyline points="10.6,5.9 6.4,10.3 10.6,14.6"/><path d="M6.8,10.3 H15.6 Q20.4,10.3 20.4,14.2 Q20.4,18.1 15.6,18.1 H6.6"/></g></svg>
<svg style="position:absolute;left:691px;top:758px;" width="26" height="24" viewBox="0 0 26 24"><g fill="none" stroke="#d4e8fb" stroke-width="1.8"><line x1="12.8" y1="4.6" x2="12.8" y2="15.9"/><polyline points="9,8.7 12.8,4.6 16.6,8.7"/><line x1="4.8" y1="18.8" x2="20.9" y2="18.8" stroke-width="2.3"/></g></svg>
<svg style="position:absolute;left:730px;top:758px;" width="26" height="24" viewBox="0 0 26 24"><g fill="none" stroke="#d4e8fb" stroke-width="1.7"><rect x="5.95" y="7.7" width="14.9" height="10.6"/><polyline points="5.95,7.7 13.4,13.6 20.85,7.7"/><line x1="5.95" y1="18.3" x2="10.4" y2="13.2"/><line x1="20.85" y1="18.3" x2="16.4" y2="13.2"/></g></svg>
<svg style="position:absolute;left:770px;top:758px;" width="26" height="24" viewBox="0 0 26 24"><g fill="none" stroke="#d4e8fb" stroke-width="1.7"><path d="M5.3,10.2 A8,8 0 0 1 20.3,8.4"/><path d="M21,13.1 A8,8 0 0 1 6.6,16.6"/><polyline points="21.1,5.1 21.1,9.3 17,9.3"/><polyline points="5,13 5,17.2 9.1,17.2"/></g></svg>
</body></html>
